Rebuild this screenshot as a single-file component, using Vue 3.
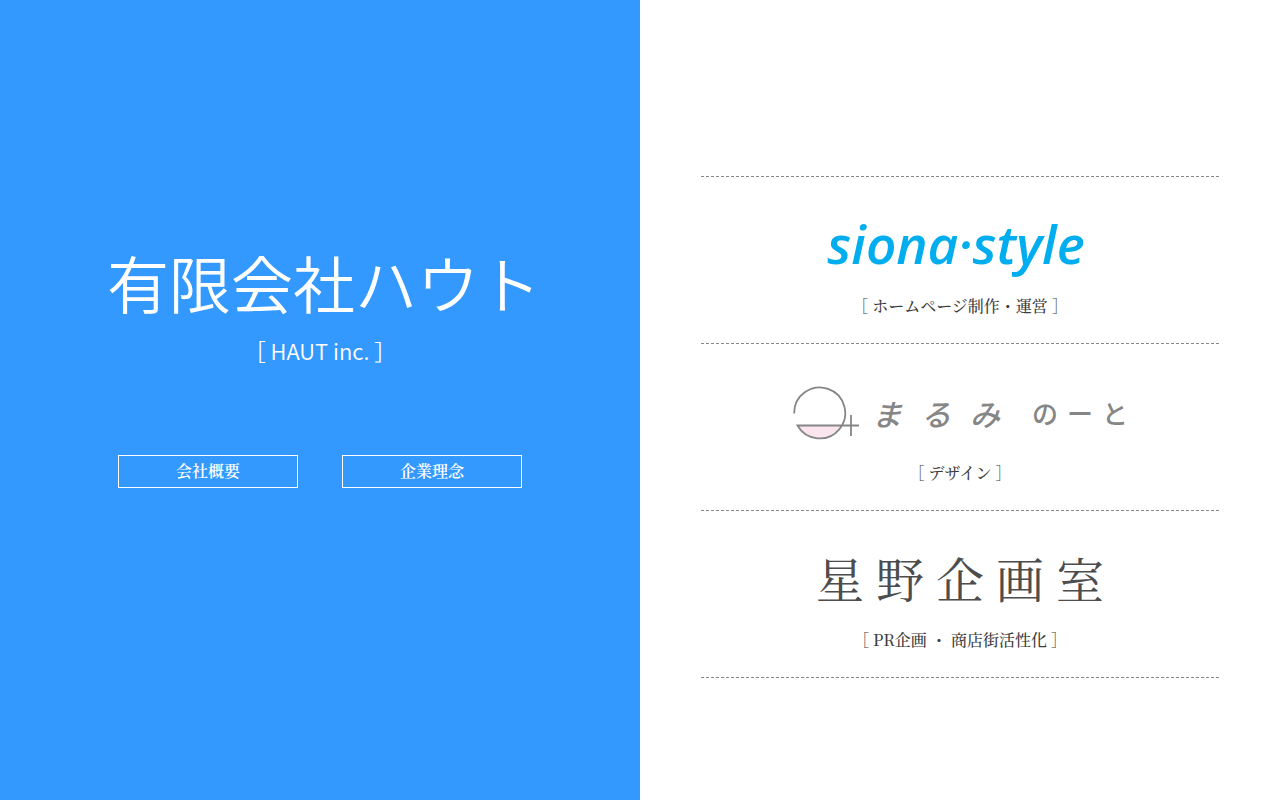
<script setup>
const nav = ['会社概要', '企業理念']
const noteWords = ['まるみ', 'のーと']
const planning = '星野企画室'
</script>

<template>
  <main class="page">
    <section class="company">
      <h1>有限会社ハウト</h1>
      <p class="english">［ HAUT inc. ］</p>
      <nav class="nav">
        <a v-for="item in nav" :key="item" href="#">{{ item }}</a>
      </nav>
    </section>

    <section class="brands">
      <ul>
        <li>
          <a href="#">
            <span class="logo siona">siona·style</span>
            <span class="caption">［ ホームページ制作・運営 ］</span>
          </a>
        </li>
        <li>
          <a href="#">
            <span class="logo note">
              <svg width="68" height="56" viewBox="0 0 68 56" fill="none" aria-hidden="true">
                <path d="M5.500 40H49C40 57 15 57 5.500 40Z" fill="#fae5ef" />
                <path d="M2.200 28.500A25.500 25.500 0 1 1 5.500 40.500H67M59 30V51" stroke="#868686" stroke-width="1.800" />
              </svg>
              <span class="words">
                <span v-for="word in noteWords" :key="word" class="word">
                  <span v-for="letter in word" :key="letter">{{ letter }}</span>
                </span>
              </span>
            </span>
            <span class="caption">［ デザイン ］</span>
          </a>
        </li>
        <li>
          <a href="#">
            <span class="logo planning">
              <span v-for="letter in planning" :key="letter">{{ letter }}</span>
            </span>
            <span class="caption">［ PR企画 ・ 商店街活性化 ］</span>
          </a>
        </li>
      </ul>
    </section>
  </main>
</template>

<style>
body {
  margin: 0;
}
</style>

<style scoped>
.page {
  display: grid;
  grid-template-columns: 1fr 1fr;
  min-height: 100vh;
  font-family: "Noto Serif CJK JP", "Noto Serif JP", "Liberation Serif", "Noto Sans CJK JP", serif;
  font-size: 16px;
  line-height: 24px;
  color: #3c3c3c;
  background: #fff;
}
a {
  color: inherit;
  text-decoration: none;
}
.company {
  display: flex;
  flex-direction: column;
  align-items: center;
  justify-content: center;
  padding-bottom: 70px;
  background: #3399ff;
  color: #fff;
}
h1 {
  margin: 0;
  padding-left: 8px;
  font-family: "Noto Sans CJK JP", sans-serif;
  font-size: 62px;
  font-weight: 350;
  line-height: 78px;
  white-space: nowrap;
}
.english {
  margin: 13px 0 0;
  font-family: "Noto Sans CJK JP", sans-serif;
  font-size: 22px;
  font-weight: 350;
  line-height: 32px;
}
.nav {
  display: flex;
  gap: 44px;
  margin-top: 89px;
}
.nav a {
  box-sizing: border-box;
  width: 180px;
  border: 1px solid #fff;
  padding: 3px 0 4px;
  text-align: center;
  font-weight: 600;
}
.brands {
  display: flex;
  flex-direction: column;
  justify-content: center;
  padding: 54px 61px 0;
}
ul {
  margin: 0;
  padding: 0;
  list-style: none;
  border-top: 1px dashed #888;
}
li {
  border-bottom: 1px dashed #888;
}
li a {
  display: flex;
  flex-direction: column;
  align-items: center;
  gap: 18px;
  padding: 35px 0 25px;
}
.logo {
  display: flex;
  box-sizing: border-box;
  align-items: center;
  justify-content: center;
  height: 64px;
  white-space: nowrap;
}
.siona {
  padding-right: 8px;
  color: #00aeef;
  font-family: "Open Sans", sans-serif;
  font-size: 53px;
  font-style: italic;
  font-weight: 600;
}
.note {
  gap: 12px;
  padding-top: 4px;
  color: #868686;
  font-family: "Noto Sans CJK JP", sans-serif;
  font-weight: 500;
}
.words {
  display: flex;
  align-items: center;
  gap: 32px;
}
.word {
  display: flex;
  gap: 9px;
  font-size: 26px;
}
.word:first-child {
  gap: 19px;
  font-size: 30px;
  font-style: italic;
}
.planning {
  gap: 12px;
  color: #4d4d4d;
  font-size: 48px;
}
.caption {
  font-weight: 500;
}
</style>
